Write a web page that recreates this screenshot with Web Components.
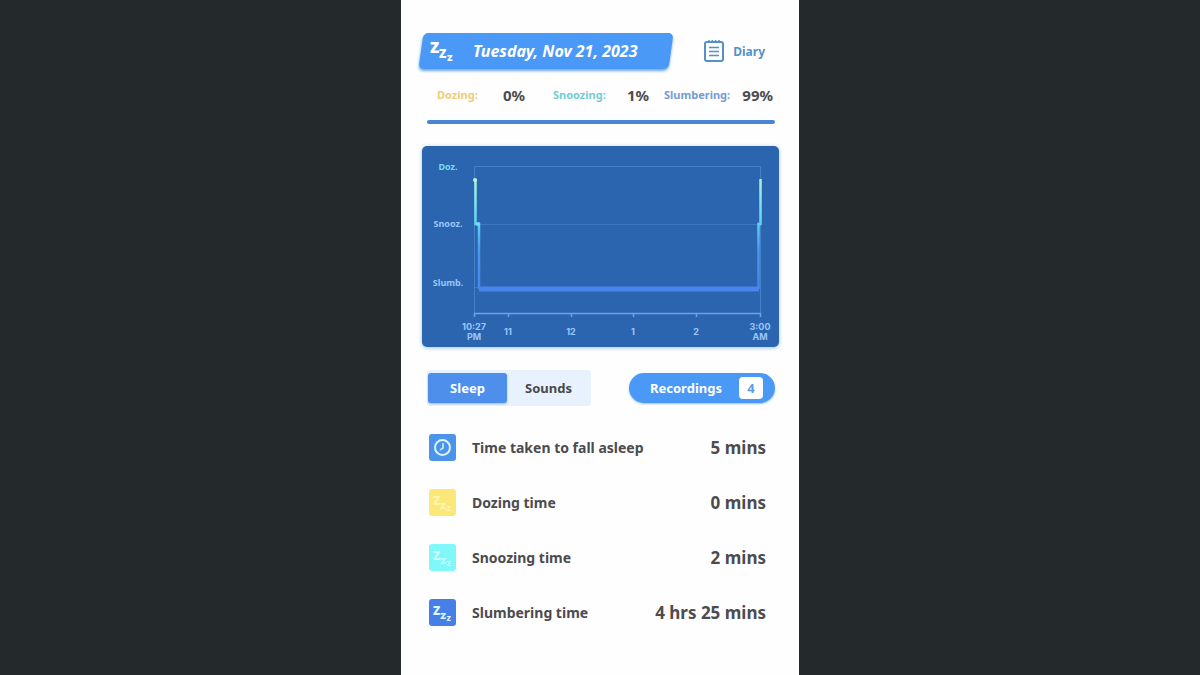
<!DOCTYPE html>
<html lang="en">
<head>
<meta charset="utf-8">
<meta name="viewport" content="width=device-width, initial-scale=1">
<title>Sleep report</title>
<style>
  body { margin: 0; background: #24292c; font-family: "Noto Sans", "Open Sans", sans-serif; font-weight: 700; color: #4c4b4f; }
</style>
</head>
<body>
<sleep-report></sleep-report>

<script>
class BaseElement extends HTMLElement {
  constructor() {
    super();
    this.attachShadow({ mode: "open" }).innerHTML = this.template();
  }
}

/* Three Z marks stepping down to the right */
customElements.define("zzz-icon", class extends BaseElement {
  template() {
    return `<style>
      :host { display: block; width: 24px; height: 22px; color: #fff; }
      svg { display: block; width: 100%; height: 100%; overflow: visible; }
      text { fill: currentColor; font-family: "Noto Sans", sans-serif; font-weight: 900; }
    </style>
    <svg viewBox="0 0 24 22" aria-hidden="true">
      <text x="0" y="13" font-size="15">Z</text>
      <text x="9" y="18" font-size="12">Z</text>
      <text x="17" y="21" font-size="9">Z</text>
    </svg>`;
  }
});

customElements.define("date-banner", class extends BaseElement {
  template() {
    return `<style>
      :host { display: flex; align-items: center; position: relative; isolation: isolate; height: 36px; width: 256px; color: #fff; font-size: 16px; font-style: italic; }
      :host::before { content: ""; position: absolute; z-index: -1; inset: 0 3px; background: #4a99f6; border-radius: 5px; transform: skewX(-8deg); box-shadow: 0 2px 3px #6fa5e0; }
      zzz-icon { margin-left: 12px; font-style: normal; }
      h1 { margin: 0 0 0 19px; font: inherit; white-space: nowrap; }
    </style><zzz-icon></zzz-icon><h1><slot></slot></h1>`;
  }
});

customElements.define("diary-button", class extends BaseElement {
  template() {
    return `<style>
      :host { display: block; }
      button { display: flex; align-items: center; gap: 9px; padding: 0; border: 0; background: none; color: #5590c6; font: inherit; font-size: 12px; cursor: pointer; }
      svg { display: block; width: 20px; height: 22px; }
    </style>
    <button type="button">
      <svg viewBox="0 0 20 22" fill="none" stroke="#5590c6" aria-hidden="true">
        <rect x="1" y="2" width="18" height="19" rx="2" stroke-width="2"/>
        <path d="M5 7.500h10M5 11.500h10M5 15.500h10" stroke-width="1.500"/>
        <path d="M5 0v3M8.300 0v3M11.600 0v3M15 0v3" stroke-width="1.500"/>
      </svg>
      <slot></slot>
    </button>`;
  }
});

customElements.define("phase-share", class extends BaseElement {
  template() {
    return `<style>
      :host { display: flex; align-items: center; justify-content: space-between; line-height: 20px; white-space: nowrap; }
      .label { font-size: 11px; color: var(--label); }
      .value { font-size: 15px; }
    </style><span class="label"><slot></slot></span><span class="value"><slot name="value"></slot></span>`;
  }
});

customElements.define("sleep-chart", class extends BaseElement {
  template() {
    return `<style>
      :host { display: block; background: #2b65af; border-radius: 5px; box-shadow: 0 1px 4px #9cc3ee; }
      svg { display: block; width: 100%; height: auto; }
      text { font-family: "Noto Sans", sans-serif; font-weight: 700; font-size: 9px; text-anchor: middle; fill: #9cc6fa; }
      .hours text { font-family: Inter, sans-serif; }
    </style>
    <svg viewBox="0 0 357 201" role="img" aria-label="Sleep phases from 10:27 PM to 3:00 AM">
      <defs>
        <linearGradient id="phase" gradientUnits="userSpaceOnUse" x1="0" y1="33" x2="0" y2="143">
          <stop offset="0" stop-color="#a9f3dc"/><stop offset=".4" stop-color="#62d3f2"/>
          <stop offset=".65" stop-color="#4b98ec"/><stop offset="1" stop-color="#4983ec"/>
        </linearGradient>
      </defs>
      <g fill="none" stroke="#4480c8">
        <path d="M52.500 167V20.500H338.500V167"/>
        <path d="M53 78.500H338M53 141.500H338" stroke="#3e78bf"/>
      </g>
      <path d="M52 167.500H339M52.500 167v4M86.500 167v4M149.500 167v4M211.500 167v4M274.500 167v4M338.500 167v4" fill="none" stroke="#6ba4e6" stroke-width="1.500"/>
      <path d="M57 143H337" stroke="#4983ec" stroke-width="5"/>
      <path d="M53.500 33V78H57V143" fill="none" stroke="url(#phase)" stroke-width="2.500"/>
      <path d="M338.500 33V78H336.500V143" fill="none" stroke="url(#phase)" stroke-width="2.500"/>
      <circle cx="53" cy="34" r="2" fill="#b8f5e4"/>
      <circle cx="56" cy="78" r="2" fill="#6fdcf2"/>
      <text x="26" y="24" style="fill:#72dcf0">Doz.</text>
      <text x="26" y="81">Snooz.</text>
      <text x="26" y="140">Slumb.</text>
      <g class="hours">
        <text x="52" y="184">10:27</text><text x="52" y="194">PM</text>
        <text x="86" y="189">11</text>
        <text x="149" y="189">12</text>
        <text x="211" y="189">1</text>
        <text x="274" y="189">2</text>
        <text x="338" y="184">3:00</text><text x="338" y="194">AM</text>
      </g>
    </svg>`;
  }
});

customElements.define("view-tabs", class extends BaseElement {
  template() {
    return `<style>
      :host { display: block; }
      div { display: grid; grid-template-columns: 79px 83px; padding: 3px 1px; background: #e8f2fe; border-radius: 3px; }
      button { height: 30px; padding: 0; border: 0; border-radius: 3px; background: none; color: #48484c; font: inherit; font-size: 13px; cursor: pointer; }
      button[aria-selected="true"] { background: #4d8feb; color: #fff; box-shadow: 0 1px 2px #8fb8ee; }
    </style>
    <div role="tablist">
      <button type="button" role="tab" aria-selected="true">Sleep</button>
      <button type="button" role="tab" aria-selected="false">Sounds</button>
    </div>`;
  }
});

customElements.define("recordings-button", class extends BaseElement {
  template() {
    return `<style>
      :host { display: block; }
      button { display: flex; align-items: center; justify-content: space-between; width: 146px; height: 30px; padding: 0 12px 0 21px; border: 0; border-radius: 15px; background: #4a99f6; color: #fff; font: inherit; font-size: 13px; box-shadow: 0 1px 2px #8fc0f5; cursor: pointer; }
      .count { width: 24px; border-radius: 4px; background: #fff; color: #5f9be0; line-height: 22px; text-align: center; }
    </style>
    <button type="button"><slot></slot><span class="count"><slot name="count"></slot></span></button>`;
  }
});

customElements.define("metric-row", class extends BaseElement {
  template() {
    return `<style>
      :host { display: flex; align-items: center; height: 55px; font-size: 14px; }
      .tile { display: grid; place-items: center; width: 27px; height: 27px; border-radius: 3px; background: var(--tile); }
      .label { flex: 1; margin-left: 16px; }
      .value { font-size: 17px; }
    </style>
    <span class="tile"><slot name="icon"></slot></span>
    <span class="label"><slot></slot></span>
    <span class="value"><slot name="value"></slot></span>`;
  }
});

customElements.define("clock-icon", class extends BaseElement {
  template() {
    return `<style>:host, svg { display: block; width: 19px; height: 19px; }</style>
    <svg viewBox="0 0 19 19" fill="none" stroke="#d9f5ff" aria-hidden="true">
      <circle cx="9.500" cy="9.500" r="7.500" stroke-width="2"/>
      <path d="M10 5v5l-3 2" stroke-width="1.500"/>
    </svg>`;
  }
});

customElements.define("sleep-report", class extends BaseElement {
  template() {
    return `<style>
      :host { display: block; box-sizing: border-box; max-width: 398px; min-height: 100vh; margin: 0 auto; background: #fefefe; }
      header { display: flex; justify-content: space-between; align-items: center; padding: 33px 34px 0 17px; }
      .shares { display: flex; justify-content: space-between; margin: 16px 26px 0 36px; }
      .shares phase-share:nth-child(1) { width: 88px; }
      .shares phase-share:nth-child(2) { width: 96px; margin-left: 13px; }
      .shares phase-share:nth-child(3) { width: 109px; }
      .bar { height: 4px; margin: 15px 24px 0 26px; border-radius: 2px; background: #4a86d0; }
      sleep-chart { margin: 22px 20px 0 21px; }
      .controls { display: flex; justify-content: space-between; align-items: center; margin: 23px 24px 0 26px; }
      .metrics { margin: 14px 33px 0 28px; }
      .metrics zzz-icon { width: 19px; height: 18px; color: var(--mark); }
    </style>
    <main>
      <header><date-banner>Tuesday, Nov 21, 2023</date-banner><diary-button>Diary</diary-button></header>
      <section class="shares">
        <phase-share style="--label:#edcc78">Dozing:<span slot="value">0%</span></phase-share>
        <phase-share style="--label:#72cdd2">Snoozing:<span slot="value">1%</span></phase-share>
        <phase-share style="--label:#759bd5">Slumbering:<span slot="value">99%</span></phase-share>
      </section>
      <div class="bar"></div>
      <sleep-chart></sleep-chart>
      <div class="controls"><view-tabs></view-tabs><recordings-button>Recordings<span slot="count">4</span></recordings-button></div>
      <section class="metrics">
        <metric-row style="--tile:#4b93eb"><clock-icon slot="icon"></clock-icon>Time taken to fall asleep<span slot="value">5 mins</span></metric-row>
        <metric-row style="--tile:#fce878;--mark:#fff5b0"><zzz-icon slot="icon"></zzz-icon>Dozing time<span slot="value">0 mins</span></metric-row>
        <metric-row style="--tile:#80f8fa;--mark:#c8ffff"><zzz-icon slot="icon"></zzz-icon>Snoozing time<span slot="value">2 mins</span></metric-row>
        <metric-row style="--tile:#467fe6;--mark:#d9f5ff"><zzz-icon slot="icon"></zzz-icon>Slumbering time<span slot="value">4 hrs 25 mins</span></metric-row>
      </section>
    </main>`;
  }
});
</script>
</body>
</html>
